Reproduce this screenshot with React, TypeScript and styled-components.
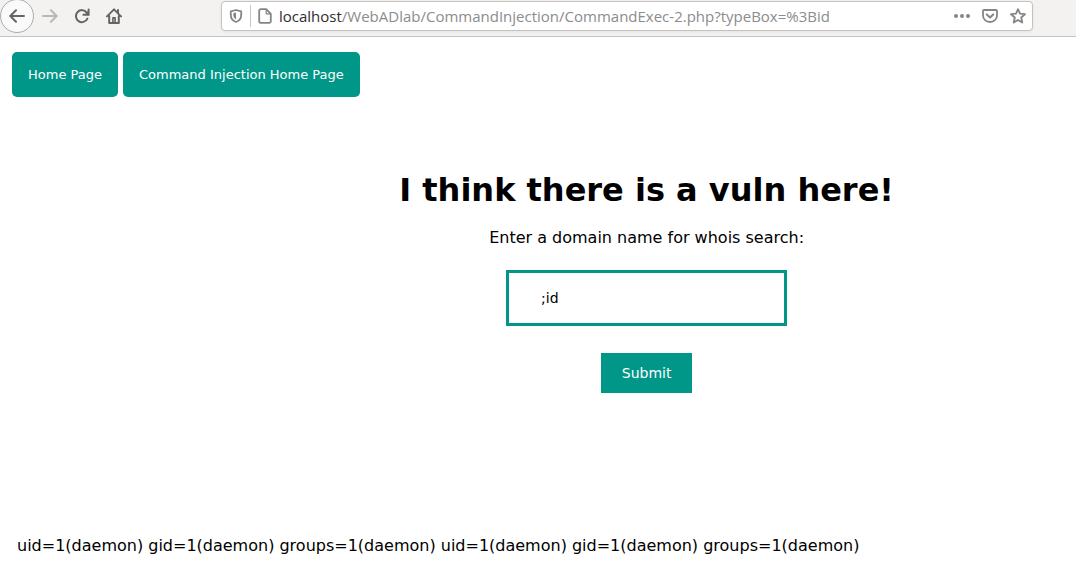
import React from "react";
import styled, { createGlobalStyle } from "styled-components";

const teal = "#009688";
const pageFont = '"DejaVu Sans", Verdana, sans-serif';
const chromeFont = '"Open Sans", sans-serif';

const GlobalStyle = createGlobalStyle`
  *, *::before, *::after { box-sizing: border-box; }
  body {
    margin: 0;
    background: #fff;
    color: #000;
    font-family: ${pageFont};
    font-size: 16px;
    line-height: 20px;
  }
  svg { display: block; }
`;

const Toolbar = styled.header`
  display: flex;
  align-items: flex-start;
  justify-content: space-between;
  height: 37px;
  background: #f3f2f1;
  border-bottom: 1px solid #c4c3c2;
`;

const NavButtons = styled.nav`
  display: flex;
  align-items: center;
  height: 32px;
`;

const ToolButton = styled.button`
  display: grid;
  place-items: center;
  width: 32px;
  height: 32px;
  padding: 0;
  border: 0;
  background: transparent;
  color: #656562;

  &:disabled {
    color: #b9b8b6;
  }
`;

const BackButton = styled(ToolButton)`
  width: 34px;
  height: 34px;
  border: 1px solid #adaba9;
  border-radius: 50%;
  background: #fafafa;
`;

const AddressBar = styled.div`
  display: flex;
  align-items: center;
  flex: 1;
  height: 30px;
  margin: 1px 43px 0 91px;
  border: 1px solid #c6c1bd;
  border-radius: 4px;
  background: #fff;
  color: #858584;
  box-shadow: 0 1px 3px rgba(0, 0, 0, 0.06);
`;

const AddressButton = styled(ToolButton)`
  width: 28px;
  height: 28px;
  color: #858584;
`;

const Divider = styled.span`
  width: 1px;
  height: 22px;
  background: #c8c8c8;
`;

const Host = styled.label`
  font-family: ${chromeFont};
  font-size: 15px;
  line-height: 20px;
  color: #2e2e2e;
`;

const PathInput = styled.input`
  flex: 1;
  min-width: 0;
  padding: 0;
  border: 0;
  outline: 0;
  background: transparent;
  font-family: ${chromeFont};
  font-size: 15px;
  line-height: 20px;
  color: #8c8c8c;
`;

const PageLinks = styled.nav`
  display: flex;
  gap: 5px;
  padding: 15px 12px 0;
`;

const PageLink = styled.a`
  padding: 15px 16px;
  border-radius: 5px;
  background: ${teal};
  color: #fff;
  font-size: 13px;
  line-height: 15px;
  text-decoration: none;
`;

const SearchForm = styled.form`
  display: flex;
  flex-direction: column;
  align-items: center;
  padding: 73px 0 0 calc(20% + 2px);
`;

const Title = styled.h1`
  margin: 0;
  font-size: 32px;
  line-height: 40px;
`;

const Prompt = styled.label`
  margin-top: 18px;
`;

const DomainInput = styled.input`
  width: 281px;
  height: 56px;
  margin-top: 22px;
  padding: 0 32px;
  border: 3px solid ${teal};
  border-radius: 0;
  outline: 0;
  background: #fff;
  color: #000;
  font-family: ${pageFont};
  font-size: 14px;
`;

const SubmitButton = styled.button`
  height: 40px;
  margin-top: 27px;
  padding: 0 21px;
  border: 0;
  background: ${teal};
  color: #fff;
  font-family: ${pageFont};
  font-size: 14px;
`;

const Output = styled.p`
  margin: 143px 0 0;
  padding: 0 17px;
`;

type IconProps = { children: React.ReactNode; fill?: string };

function Icon({ children, fill = "none" }: IconProps) {
  return (
    <svg
      width="16"
      height="16"
      viewBox="0 0 16 16"
      fill={fill}
      stroke="currentColor"
      strokeWidth="2"
      strokeLinecap="round"
      strokeLinejoin="round"
      aria-hidden="true"
    >
      {children}
    </svg>
  );
}

export default function App() {
  return (
    <>
      <GlobalStyle />
      <Toolbar>
        <NavButtons aria-label="Browser">
          <BackButton type="button" aria-label="Back">
            <Icon><path d="M15 8H1.5M7 2.2 1.3 8 7 13.8" /></Icon>
          </BackButton>
          <ToolButton type="button" aria-label="Forward" disabled>
            <Icon><path d="M1 8h13.5M9 2.2 14.7 8 9 13.8" /></Icon>
          </ToolButton>
          <ToolButton type="button" aria-label="Reload">
            <Icon>
              <path d="M12.8 4.6A6 6 0 1 0 13.4 10.6" />
              <path d="M14.6 1.5v5.2H9.4" strokeLinejoin="miter" />
              <path d="M11.5 6.2 14.2 3.5v2.7z" fill="currentColor" strokeWidth="1" />
            </Icon>
          </ToolButton>
          <ToolButton type="button" aria-label="Home">
            <Icon>
              <path d="M1 8.4 8 1.4l7 7M3.2 8v7h9.6V8" />
              <path d="M12 2v3" />
              <path d="M6.9 9.9h2.2V15H6.9z" strokeWidth="1.6" />
            </Icon>
          </ToolButton>
        </NavButtons>
        <AddressBar>
          <AddressButton type="button" aria-label="Tracking protection">
            <svg width="16" height="16" viewBox="0 0 16 16" fill="none" aria-hidden="true">
              <path
                d="M8 2 13.2 3.4V7c0 3.6-2.1 5.9-5.2 7-3.1-1.1-5.2-3.4-5.2-7V3.4z"
                stroke="currentColor"
                strokeWidth="1.8"
                strokeLinejoin="round"
              />
              <path d="M8 4.6v6.8C6.2 10.4 5.3 8.9 5.3 7V5.3z" fill="currentColor" />
            </svg>
          </AddressButton>
          <Divider />
          <AddressButton type="button" aria-label="Site information">
            <Icon>
              <path d="M3.8 1.2h5.4l4.6 4.6v7.4a1.6 1.6 0 0 1-1.6 1.6H3.8a1.6 1.6 0 0 1-1.6-1.6V2.8a1.6 1.6 0 0 1 1.6-1.6z" strokeWidth="1.8" />
              <path d="M9.2 1.6v4.2h4.2" strokeWidth="1.2" />
            </Icon>
          </AddressButton>
          <Host htmlFor="address">localhost</Host>
          <PathInput
            id="address"
            type="text"
            spellCheck={false}
            defaultValue="/WebADlab/CommandInjection/CommandExec-2.php?typeBox=%3Bid"
          />
          <AddressButton type="button" aria-label="Page actions">
            <svg width="16" height="16" viewBox="0 0 16 16" fill="currentColor" aria-hidden="true">
              <circle cx="2" cy="8" r="2" />
              <circle cx="8" cy="8" r="2" />
              <circle cx="14" cy="8" r="2" />
            </svg>
          </AddressButton>
          <AddressButton type="button" aria-label="Save to Pocket">
            <Icon>
              <path d="M2 2h12a1 1 0 0 1 1 1v4.5a7 6.5 0 0 1-14 0V3a1 1 0 0 1 1-1z" strokeWidth="1.8" />
              <path d="M4.8 6.4 8 9.4l3.2-3" />
            </Icon>
          </AddressButton>
          <AddressButton type="button" aria-label="Bookmark this page">
            <Icon>
              <path d="m8 1.2 2 4.5 5 .5-3.8 3.3 1.1 5L8 11.9l-4.3 2.6 1.1-5L1 6.2l5-.5z" strokeWidth="1.8" />
            </Icon>
          </AddressButton>
        </AddressBar>
      </Toolbar>
      <main>
        <PageLinks aria-label="Site">
          <PageLink href="#home">Home Page</PageLink>
          <PageLink href="#command-injection">Command Injection Home Page</PageLink>
        </PageLinks>
        <SearchForm onSubmit={(event) => event.preventDefault()}>
          <Title>I think there is a vuln here!</Title>
          <Prompt htmlFor="typeBox">Enter a domain name for whois search:</Prompt>
          <DomainInput id="typeBox" name="typeBox" type="text" defaultValue=";id" />
          <SubmitButton type="submit">Submit</SubmitButton>
        </SearchForm>
        <Output>
          uid=1(daemon) gid=1(daemon) groups=1(daemon) uid=1(daemon) gid=1(daemon) groups=1(daemon)
        </Output>
      </main>
    </>
  );
}
